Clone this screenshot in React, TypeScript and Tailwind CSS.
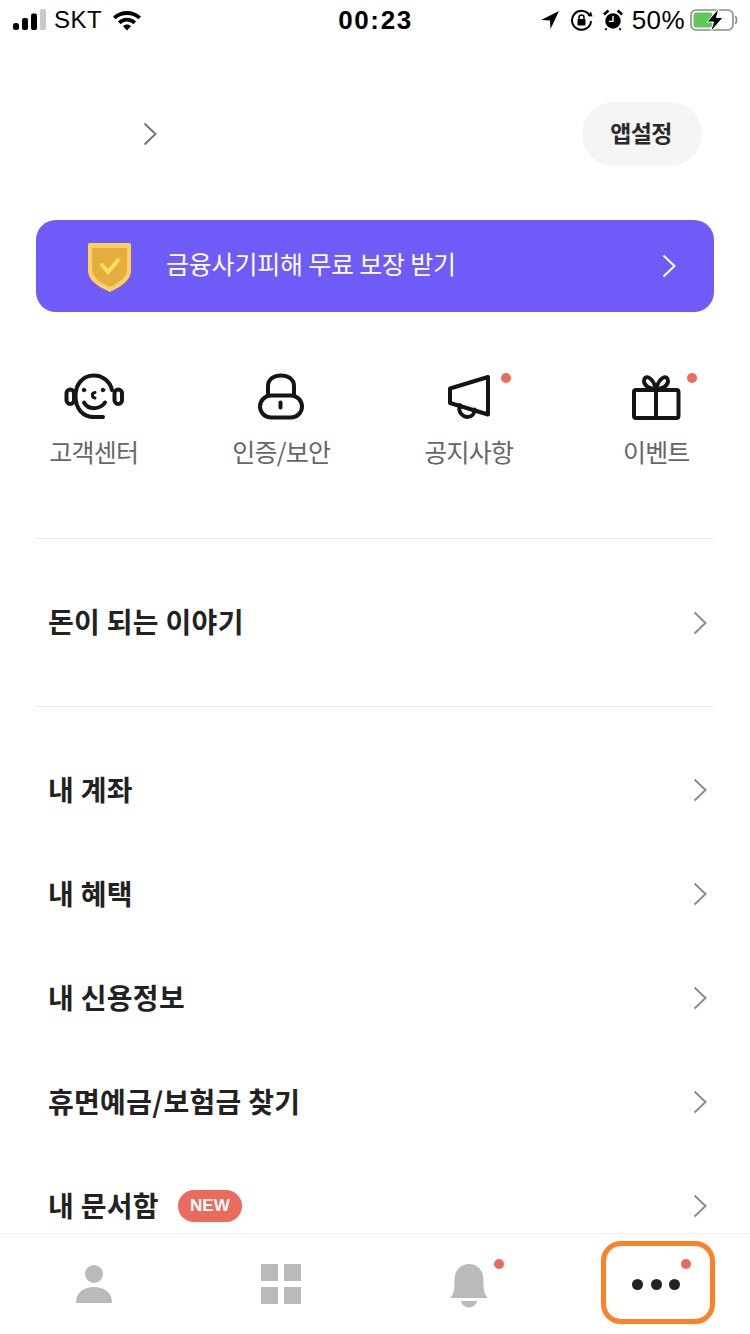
import React from "react";

const Chevron = ({ w = 14, h = 24, color = "#8c8c8c", sw = 2 }: { w?: number; h?: number; color?: string; sw?: number }) => (
  <svg width={w} height={h} viewBox="0 0 14 24" fill="none" className="block shrink-0">
    <path d="M1.5 1.5 L12.5 12 L1.5 22.5" stroke={color} strokeWidth={sw} />
  </svg>
);

const Dot = ({ className }: { className: string }) => (
  <span className={`absolute w-[10px] h-[10px] rounded-full bg-[#ec6a5c] ${className}`} />
);

const Row = ({ label, badge }: { label: string; badge?: boolean }) => (
  <div className="h-[104px] shrink-0 flex items-center pl-[48px] pr-[43px]">
    <span className="text-[28px] font-bold text-[#222222] leading-none tracking-[0.3px] pb-[3px]">{label}</span>
    {badge && (
      <span className="ml-[19px] w-[64px] h-[32px] rounded-full bg-[#ea6a5b] text-white text-[17px] font-bold flex items-center justify-center font-['Liberation_Sans',sans-serif]">
        NEW
      </span>
    )}
    <span className="ml-auto">
      <Chevron />
    </span>
  </div>
);

const Headset = () => (
  <svg width="60" height="50" viewBox="64 372 60 50" fill="none" stroke="#151515" strokeWidth="4" strokeLinecap="round" className="block">
    <path d="M112 390 C110 381 102 375.5 94 375.5 C82 375.5 75.5 385 75.5 396 C75.5 409 83 417 94 417 L103 417" />
    <rect x="66.5" y="389.5" width="7.5" height="14.5" rx="3.7" />
    <rect x="114.5" y="389.5" width="7.5" height="14.5" rx="3.7" />
    <path d="M84 402.5 C88 410 100 410 105 402.5" />
    <circle cx="84" cy="390" r="1.8" fill="#151515" strokeWidth="1" />
    <circle cx="103" cy="390" r="1.8" fill="#151515" strokeWidth="1" />
    <path d="M95 392.5 C91.5 393 91.5 397.5 95 398" strokeWidth="3" />
  </svg>
);

const Lock = () => (
  <svg width="60" height="50" viewBox="251 372 60 50" fill="none" stroke="#151515" strokeWidth="4" strokeLinecap="round" className="block">
    <rect x="260" y="395.5" width="42" height="22" rx="11" />
    <path d="M268 395 V386 C268 379 274 375.5 281 375.5 C288 375.5 294 379 294 386 V395" />
    <path d="M280.5 402.5 V407.5" strokeWidth="4" />
  </svg>
);

const Megaphone = () => (
  <svg width="60" height="50" viewBox="438 372 60 50" fill="none" stroke="#151515" strokeWidth="4" strokeLinejoin="round" strokeLinecap="round" className="block">
    <path d="M449 388.5 L487 377 V414.5 L449 403 Z" />
    <path d="M459 405 C456 413 463 417 466.5 417 C471 417 473.5 413.5 473.5 409.5" />
  </svg>
);

const Gift = () => (
  <svg width="60" height="50" viewBox="626 372 60 50" fill="none" stroke="#151515" strokeWidth="4" strokeLinejoin="round" strokeLinecap="round" className="block">
    <rect x="634" y="390" width="44.5" height="28" rx="2" />
    <path d="M656 390 V418" />
    <path d="M656 389 C650 389 644 386 644 381 C644 375 652 375 656 389 C660 375 668 375 668 381 C668 386 662 389 656 389 Z" />
  </svg>
);

const Shield = () => (
  <svg width="44" height="50" viewBox="88 243 44 50" className="block mt-[3px]">
    <path d="M90 243 H129 Q131 243 131 245 V270 C131 281 120 287 110 292 C99 287 88 281 88 270 V245 Q88 243 90 243 Z" fill="#fbd25f" />
    <path d="M92 248 H127 V269 C127 278 118 283 110 287 C101 283 92 278 92 269 Z" fill="#e4ad3d" />
    <path d="M101 264 L108 272 L119 259" fill="none" stroke="#fde05f" strokeWidth="4" />
  </svg>
);

const QuickItem = ({ icon, label, dot }: { icon: React.ReactNode; label: string; dot?: string }) => (
  <div className="flex flex-col items-center">
    <div className="relative w-[60px] h-[50px]">
      {icon}
      {dot && <Dot className={dot} />}
    </div>
    <span className="mt-[14px] text-[25px] leading-[30px] text-[#666666] tracking-[-0.8px] whitespace-nowrap">{label}</span>
  </div>
);

const StatusBar = () => (
  <div className="h-[40px] shrink-0 flex items-center text-black font-['Liberation_Sans','Inter',sans-serif]">
    <div className="flex-1 flex items-center pl-[13px]">
      <svg width="34" height="22" viewBox="0 0 34 22" className="block">
        <rect x="0" y="14" width="6" height="7" rx="2.5" fill="#000" />
        <rect x="9" y="9" width="6" height="12" rx="2" fill="#000" />
        <rect x="18" y="4.5" width="6" height="16.5" rx="2" fill="#000" />
        <rect x="27" y="0" width="6" height="21" rx="1.5" fill="#c9c9c9" />
      </svg>
      <span className="ml-[7px] text-[24px] leading-none tracking-[0.5px]">SKT</span>
      <svg width="30" height="22" viewBox="0 0 30 22" className="block ml-[10px]">
        <path d="M1 7.5 C8.5 0 21.5 0 29 7.5 L26.5 10.2 C20.5 4.5 9.5 4.5 3.5 10.2 Z" fill="#000" />
        <path d="M6 12.5 C11 7.5 19 7.5 24 12.5 L21.4 15.2 C17.5 11.6 12.5 11.6 8.6 15.2 Z" fill="#000" />
        <path d="M11 17.3 C13.3 15 16.7 15 19 17.3 L15 21.5 Z" fill="#000" />
      </svg>
    </div>
    <span className="text-[26px] font-bold leading-none tracking-[1.6px]">00:23</span>
    <div className="flex-1 flex items-center justify-end pr-[12px]">
      <svg width="20" height="20" viewBox="0 0 20 20" className="block">
        <path d="M19 1 L1 10 L10 10.5 L10.5 19 Z" fill="#000" />
      </svg>
      <svg width="24" height="24" viewBox="0 0 24 24" fill="none" className="block ml-[10px]">
        <path d="M20 8 A9.5 9.5 0 1 0 21 13" stroke="#000" strokeWidth="2" />
        <path d="M17.5 8 L22.5 8.5 L21 3.5 Z" fill="#000" />
        <rect x="7.5" y="11" width="8" height="6.5" rx="1" fill="#000" />
        <path d="M9 11 V9.5 A2.5 2.5 0 0 1 14 9.5 V11" stroke="#000" strokeWidth="1.5" />
      </svg>
      <svg width="20" height="24" viewBox="0 0 22 24" fill="none" className="block ml-[9px]">
        <circle cx="11" cy="13" r="8.5" fill="#000" />
        <path d="M11 7.5 V13.5 H6.5" stroke="#fff" strokeWidth="1.6" />
        <path d="M1 6 L6 1.5 M21 6 L16 1.5" stroke="#000" strokeWidth="2.8" />
        <path d="M4 21 L2.5 23 M18 21 L19.5 23" stroke="#000" strokeWidth="2" />
      </svg>
      <span className="ml-[9px] text-[26px] leading-none tracking-[0.4px]">50%</span>
      <svg width="48" height="26" viewBox="0 0 48 26" fill="none" className="block ml-[5px]">
        <rect x="1" y="3" width="42" height="20" rx="5" stroke="#8a8a8a" strokeWidth="1.6" />
        <path d="M45 9.5 C47 10 47 16 45 16.5" stroke="#8a8a8a" strokeWidth="1.8" />
        <rect x="3.5" y="5.5" width="19" height="15" rx="2.5" fill="#5fc85c" />
        <path d="M29 1 L17 15 H23.5 L20.5 25 L33 10.5 H26.5 Z" fill="#000" stroke="#fff" strokeWidth="1" />
      </svg>
    </div>
  </div>
);

const TabBar = () => (
  <div className="relative h-[101px] shrink-0 bg-white border-t border-[#efefef] grid grid-cols-4">
    <div className="flex items-center justify-center">
      <svg width="36" height="38" viewBox="0 0 36 38" className="block">
        <circle cx="18" cy="9" r="9" fill="#bababa" />
        <path d="M0 38 C0 27 8 22 18 22 C28 22 36 27 36 38 Z" fill="#bababa" />
      </svg>
    </div>
    <div className="flex items-center justify-center">
      <div className="grid grid-cols-2 gap-[6px]">
        <span className="w-[17px] h-[17px] bg-[#bababa]" />
        <span className="w-[17px] h-[17px] bg-[#bababa]" />
        <span className="w-[17px] h-[17px] bg-[#bababa]" />
        <span className="w-[17px] h-[17px] bg-[#bababa]" />
      </div>
    </div>
    <div className="flex items-center justify-center pt-[4px]">
      <div className="relative">
        <svg width="38" height="44" viewBox="0 0 38 44" className="block">
          <path d="M0 34 C4 30 4.5 26 4.5 16 C4.5 6 11 0 19 0 C27 0 33.5 6 33.5 16 C33.5 26 34 30 38 34 Z" fill="#bababa" />
          <path d="M11 37 H27 C25.5 45.5 12.5 45.5 11 37 Z" fill="#bababa" />
        </svg>
        <Dot className="top-[-5px] right-[-16px]" />
      </div>
    </div>
    <div className="flex items-center justify-center">
      <div className="relative flex gap-[7.5px]">
        <span className="w-[11px] h-[11px] rounded-full bg-[#222222]" />
        <span className="w-[11px] h-[11px] rounded-full bg-[#222222]" />
        <span className="w-[11px] h-[11px] rounded-full bg-[#222222]" />
        <Dot className="top-[-20px] right-[-11px]" />
      </div>
    </div>
    <div className="absolute left-[601px] top-[7px] w-[114px] h-[83px] rounded-[20px] border-[5px] border-[#ff8126]" />
  </div>
);

export default function App() {
  return (
    <div className="w-[750px] h-[1334px] bg-white flex flex-col overflow-hidden font-['Noto_Sans_CJK_KR','Noto_Sans',sans-serif]">
      <StatusBar />
      <div className="flex-1 min-h-0 overflow-hidden flex flex-col">
        <div className="mt-[62px] flex items-center justify-between pl-[143px] pr-[48px]">
          <Chevron w={14} h={24} color="#777777" />
          <button className="w-[120px] h-[64px] rounded-full bg-[#f5f5f5] text-[23px] font-bold text-[#2a2a2a] flex items-center justify-center tracking-[-0.7px] pb-[3px] pr-[2px]">
            앱설정
          </button>
        </div>
        <div className="mt-[54px] mx-[36px] h-[92px] shrink-0 rounded-[20px] bg-[#6f5bf8] flex items-center pl-[52px] pr-[38px]">
          <Shield />
          <span className="ml-[34px] text-[25px] text-white tracking-[-0.2px] pb-[4px]">금융사기피해 무료 보장 받기</span>
          <span className="ml-auto">
            <Chevron color="#ffffff" />
          </span>
        </div>
        <div className="mt-[60px] grid grid-cols-4">
          <QuickItem icon={<Headset />} label="고객센터" />
          <QuickItem icon={<Lock />} label="인증/보안" />
          <QuickItem icon={<Megaphone />} label="공지사항" dot="top-[1px] left-[62px]" />
          <QuickItem icon={<Gift />} label="이벤트" dot="top-[1px] left-[61px]" />
        </div>
        <div className="mt-[72px] mx-[36px] h-px shrink-0 bg-[#e8e8e8]" />
        <div className="h-[167px] shrink-0 flex flex-col justify-center">
          <Row label="돈이 되는 이야기" />
        </div>
        <div className="mx-[36px] h-px shrink-0 bg-[#e8e8e8]" />
        <div className="mt-[31px] flex flex-col">
          <Row label="내 계좌" />
          <Row label="내 혜택" />
          <Row label="내 신용정보" />
          <Row label="휴면예금/보험금 찾기" />
          <Row label="내 문서함" badge />
        </div>
      </div>
      <TabBar />
    </div>
  );
}
